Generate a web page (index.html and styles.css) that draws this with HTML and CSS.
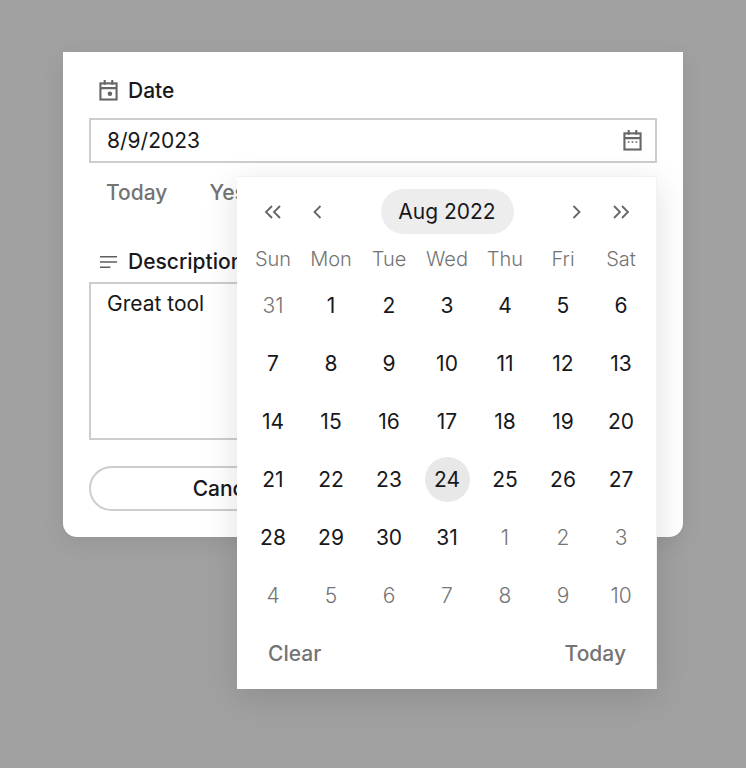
FILE: index.html
```html
<!DOCTYPE html>
<html lang="en">
<head>
<meta charset="utf-8">
<title>Date</title>
<link rel="stylesheet" href="styles.css">
</head>
<body>
<main class="card">
  <div class="label">
    <svg class="label-icon" viewBox="0 0 20 22" fill="none" stroke="currentColor" stroke-width="2.2"><rect x="1.500" y="3.500" width="17" height="17"/><path d="M1.500 8.500h17M6 0v5M14 0v5"/><circle cx="11.500" cy="14.500" r="2.400" fill="currentColor" stroke="none"/></svg>
    <span>Date</span>
  </div>
  <div class="field date-field">
    <span>8/9/2023</span>
    <svg class="field-icon" viewBox="0 0 20 22" fill="none" stroke="currentColor" stroke-width="2.2"><rect x="1.500" y="3.500" width="17" height="17"/><path d="M1.500 8.500h17M6 0v5M14 0v5"/><path d="M5 12.500h1.800M9.100 12.500h1.800M13.200 12.500h1.800" stroke-width="1.500"/></svg>
  </div>
  <div class="shortcuts"><span>Today</span><span>Yesterday</span></div>
  <div class="label desc-label">
    <svg class="lines-icon" viewBox="0 0 20 14" fill="none" stroke="currentColor" stroke-width="1.7"><path d="M1 1.500h18M1 7h18M1 12.500h11"/></svg>
    <span>Description</span>
  </div>
  <div class="field note">Great tool</div>
  <div class="actions"><div class="btn">Cancel</div></div>
</main>

<section class="picker">
  <header class="picker-head">
    <div class="nav-group">
      <svg class="nav" viewBox="0 0 20 14" fill="none" stroke="currentColor" stroke-width="1.800"><path d="M9 1 3 7l6 6M17 1l-6 6 6 6"/></svg>
      <svg class="nav" viewBox="0 0 20 14" fill="none" stroke="currentColor" stroke-width="1.800"><path d="M12.500 1l-6 6 6 6"/></svg>
    </div>
    <div class="month">Aug 2022</div>
    <div class="nav-group">
      <svg class="nav" viewBox="0 0 20 14" fill="none" stroke="currentColor" stroke-width="1.800"><path d="M7.500 1l6 6-6 6"/></svg>
      <svg class="nav" viewBox="0 0 20 14" fill="none" stroke="currentColor" stroke-width="1.800"><path d="M3 1l6 6-6 6M11 1l6 6-6 6"/></svg>
    </div>
  </header>
  <div class="weekdays"><span>Sun</span><span>Mon</span><span>Tue</span><span>Wed</span><span>Thu</span><span>Fri</span><span>Sat</span></div>
  <div class="days">
    <span class="muted">31</span><span>1</span><span>2</span><span>3</span><span>4</span><span>5</span><span>6</span>
    <span>7</span><span>8</span><span>9</span><span>10</span><span>11</span><span>12</span><span>13</span>
    <span>14</span><span>15</span><span>16</span><span>17</span><span>18</span><span>19</span><span>20</span>
    <span>21</span><span>22</span><span>23</span><span class="today">24</span><span>25</span><span>26</span><span>27</span>
    <span>28</span><span>29</span><span>30</span><span>31</span><span class="muted">1</span><span class="muted">2</span><span class="muted">3</span>
    <span class="muted">4</span><span class="muted">5</span><span class="muted">6</span><span class="muted">7</span><span class="muted">8</span><span class="muted">9</span><span class="muted">10</span>
  </div>
  <footer class="picker-foot"><span>Clear</span><span>Today</span></footer>
</section>
</body>
</html>
```
FILE: styles.css
```css
* { box-sizing: border-box; }
html, body { margin: 0; height: 100%; }
body {
  position: relative;
  height: 768px;
  overflow: hidden;
  background: #a1a1a1;
  padding: 52px 63px 0;
  font-family: Inter, "Liberation Sans", sans-serif;
  font-size: 21px;
  font-weight: 375;
  color: #18181b;
}
.card {
  width: 620px;
  height: 485px;
  background: #fff;
  border-radius: 0 0 14px 14px;
  padding: 27px 26px 0;
  display: flex;
  flex-direction: column;
  box-shadow: 0 6px 24px rgba(0, 0, 0, .08);
}
.label {
  height: 24px;
  display: flex;
  align-items: center;
  gap: 10px;
  padding-left: 10px;
  font-size: 21px;
  font-weight: 450;
  line-height: 24px;
}
.label-icon { width: 19px; height: 21px; margin-bottom: 1px; color: #666; }
.lines-icon { width: 19px; height: 14px; color: #5f5f5f; }
.field {
  border: 2px solid #cdcdcd;
  padding: 0 16px;
  line-height: 24px;
}
.date-field {
  height: 45px;
  margin-top: 15px;
  display: flex;
  align-items: center;
  justify-content: space-between;
}
.field-icon { width: 19px; height: 21px; color: #666; margin-right: -3px; }
.shortcuts {
  display: flex;
  gap: 42px;
  height: 24px;
  margin-top: 18px;
  padding-left: 17px;
  color: #747474;
  font-weight: 450;
  line-height: 24px;
}
.desc-label { margin-top: 45px; }
.note { height: 158px; margin-top: 8px; padding-top: 8px; }
.actions { margin-top: 26px; display: flex; }
.btn {
  width: 277px;
  height: 45px;
  border: 2px solid #cdcdcd;
  border-radius: 23px;
  display: flex;
  align-items: center;
  justify-content: center;
  font-weight: 500;
}
.picker {
  position: absolute;
  left: 237px;
  top: 176px;
  width: 420px;
  height: 513px;
  background: #fff;
  padding: 13px 7px 0;
  box-shadow: inset 0 1px 0 #f2f2f2, inset -1px 0 0 #f2f2f2, 0 8px 32px rgba(0, 0, 0, .13);
}
.picker-head {
  height: 45px;
  display: flex;
  align-items: center;
  justify-content: space-between;
  padding: 0 19px;
}
.nav-group { display: flex; gap: 25px; width: 90px; }
.nav-group + .month + .nav-group { justify-content: flex-end; }
.nav { width: 20px; height: 14px; color: #666; }
.month {
  width: 133px;
  height: 45px;
  border-radius: 23px;
  background: #ededed;
  display: flex;
  align-items: center;
  justify-content: center;
  margin: 0 -5px;
}
.weekdays, .days {
  display: grid;
  grid-template-columns: repeat(7, 58px);
  justify-items: center;
  align-items: center;
}
.weekdays { height: 24px; margin-top: 13px; color: #747474; font-size: 20px; font-weight: 300; line-height: 24px; }
.days { grid-auto-rows: 58px; margin-top: 5px; }
.days span {
  width: 45px;
  height: 45px;
  border-radius: 50%;
  display: flex;
  align-items: center;
  justify-content: center;
}
.days .muted { color: #757575; font-weight: 300; }
.days .today { background: #e8e8e8; }
.picker-foot {
  display: flex;
  justify-content: space-between;
  padding: 0 24px;
  margin-top: 18px;
  color: #747474;
  font-weight: 450;
  line-height: 24px;
}
```
